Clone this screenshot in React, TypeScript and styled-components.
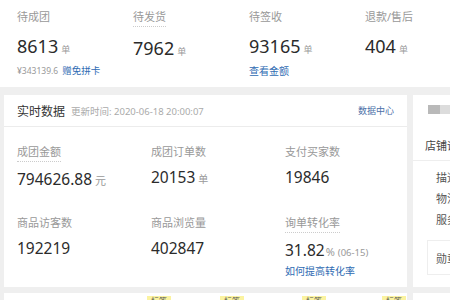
import styled, { createGlobalStyle } from "styled-components";

const GlobalStyle = createGlobalStyle`
  html, body {
    margin: 0;
    padding: 0;
    background: #efefef;
    overflow: hidden;
  }
  body {
    font-family: "Noto Sans", "Noto Sans CJK SC", sans-serif;
    color: #333;
  }
`;

const Page = styled.div`
  width: 450px;
  height: 300px;
  overflow: hidden;
  display: flex;
  flex-direction: column;
  & > * {
    flex-shrink: 0;
  }
`;

const TopCard = styled.div`
  height: 87px;
  background: #fff;
  box-sizing: border-box;
  padding: 9px 0 0 17px;
  display: grid;
  grid-template-columns: repeat(4, 116px);
  align-items: start;
`;

const Label = styled.span<{ $dotted?: boolean }>`
  align-self: flex-start;
  font-size: 11px;
  line-height: 16px;
  color: #999;
  padding-bottom: ${({ $dotted }) => ($dotted ? "1px" : "0")};
  border-bottom: ${({ $dotted }) => ($dotted ? "1px dotted #ccc" : "none")};
  white-space: nowrap;
`;

const Stat = styled.div`
  display: flex;
  flex-direction: column;
`;

const BigNumber = styled.div`
  margin-top: 9px;
  font-size: 18px;
  line-height: 24px;
  color: #2b2b2b;
  white-space: nowrap;
`;

const Unit = styled.span<{ $size?: number; $gap?: number }>`
  font-size: ${({ $size }) => $size ?? 9}px;
  color: #999;
  margin-left: ${({ $gap }) => $gap ?? 3}px;
`;

const SubLine = styled.div<{ $gap?: number }>`
  margin-top: ${({ $gap }) => $gap ?? 3}px;
  font-size: 8.5px;
  line-height: 12px;
  color: #999;
  white-space: nowrap;
`;

const Link = styled.span<{ $size?: number; $gap?: number }>`
  font-size: ${({ $size }) => $size ?? 9.5}px;
  color: #2f6bb3;
  margin-left: ${({ $gap }) => $gap ?? 0}px;
`;

const MiddleRow = styled.div`
  display: flex;
  margin-top: 8px;
  height: 192px;
`;

const MainCard = styled.div`
  width: 403px;
  margin-left: 4px;
  background: #fff;
  display: flex;
  flex-direction: column;
`;

const CardHeader = styled.div`
  height: 31px;
  display: flex;
  align-items: center;
  padding: 0 13px;
  border-bottom: 1px solid #ececec;
`;

const HeaderTitle = styled.span`
  font-size: 12px;
  color: #333;
`;

const HeaderTime = styled.span`
  font-size: 9.5px;
  color: #aaa;
  margin-left: 6px;
`;

const HeaderLink = styled.span`
  margin-left: auto;
  font-size: 9px;
  color: #4a6fa8;
`;

const CardBody = styled.div`
  display: grid;
  grid-template-columns: 134px 134px 134px;
  row-gap: 23px;
  padding: 17px 0 0 13px;
`;

const MetricNumber = styled.div`
  margin-top: 6px;
  font-size: 15.5px;
  line-height: 22px;
  color: #2b2b2b;
  white-space: nowrap;
`;

const Note = styled.span`
  font-size: 9.5px;
  color: #999;
  margin-left: 3px;
`;

const SideCard = styled.div`
  flex: 1;
  margin-left: 6px;
  background: #fff;
  display: flex;
  flex-direction: column;
  overflow: hidden;
`;

const SideThumb = styled.div`
  margin: 10px 0 0 15px;
  display: flex;
  height: 9px;
`;

const ThumbPiece = styled.div<{ $tone: string; $w: number }>`
  width: ${({ $w }) => $w}px;
  flex-shrink: 0;
  background: ${({ $tone }) => $tone};
`;

const SideTitle = styled.div`
  margin-top: 24px;
  padding: 0 0 6px 12px;
  border-bottom: 1px solid #eee;
  font-size: 11px;
  line-height: 16px;
  color: #444;
  white-space: nowrap;
`;

const SideList = styled.div`
  display: flex;
  flex-direction: column;
  gap: 5px;
  padding: 9px 0 0 23px;
`;

const SideItem = styled.span`
  font-size: 11px;
  line-height: 16px;
  color: #555;
  white-space: nowrap;
`;

const SideBox = styled.div`
  margin: 12px 0 0 14px;
  height: 33px;
  border: 1px solid #eee;
  border-right: none;
  display: flex;
  align-items: center;
  padding-left: 8px;
  font-size: 11px;
  color: #555;
  white-space: nowrap;
`;

const BottomRow = styled.div`
  display: flex;
  margin-top: 6px;
  height: 20px;
`;

const BottomCard = styled.div`
  width: 403px;
  margin-left: 4px;
  background: #fff;
  display: grid;
  grid-template-columns: 143px 73px 82px 80px 1fr;
  align-items: start;
  padding-top: 3px;
`;

const Tag = styled.span`
  justify-self: start;
  height: 12px;
  padding: 0 4px;
  background: #fbf3a0;
  font-size: 8px;
  line-height: 10px;
  color: #555;
  &:first-child {
    grid-column: 2;
  }
`;

const BottomSide = styled.div`
  flex: 1;
  margin-left: 6px;
  background: #fff;
`;

const topStats = [
  { label: "待成团", value: "8613", extra: "price" },
  { label: "待发货", value: "7962", dotted: true },
  { label: "待签收", value: "93165", extra: "amount" },
  { label: "退款/售后", value: "404" },
];

export default function App() {
  return (
    <Page>
      <GlobalStyle />
      <TopCard>
        {topStats.map((s) => (
          <Stat key={s.label}>
            <Label $dotted={s.dotted}>{s.label}</Label>
            <BigNumber>
              {s.value}
              <Unit>单</Unit>
            </BigNumber>
            {s.extra === "price" && (
              <SubLine>
                ¥343139.6<Link $gap={4}>赠免拼卡</Link>
              </SubLine>
            )}
            {s.extra === "amount" && (
              <SubLine>
                <Link $size={10}>查看金额</Link>
              </SubLine>
            )}
          </Stat>
        ))}
      </TopCard>

      <MiddleRow>
        <MainCard>
          <CardHeader>
            <HeaderTitle>实时数据</HeaderTitle>
            <HeaderTime>更新时间: 2020-06-18 20:00:07</HeaderTime>
            <HeaderLink>数据中心</HeaderLink>
          </CardHeader>
          <CardBody>
            <Stat>
              <Label $dotted>成团金额</Label>
              <MetricNumber>
                794626.88<Unit $size={11}>元</Unit>
              </MetricNumber>
            </Stat>
            <Stat>
              <Label>成团订单数</Label>
              <MetricNumber>
                20153<Unit $size={10}>单</Unit>
              </MetricNumber>
            </Stat>
            <Stat>
              <Label>支付买家数</Label>
              <MetricNumber>19846</MetricNumber>
            </Stat>
            <Stat>
              <Label>商品访客数</Label>
              <MetricNumber>192219</MetricNumber>
            </Stat>
            <Stat>
              <Label>商品浏览量</Label>
              <MetricNumber>402847</MetricNumber>
            </Stat>
            <Stat>
              <Label $dotted>询单转化率</Label>
              <MetricNumber>
                31.82<Unit $size={11} $gap={1}>%</Unit>
                <Note>(06-15)</Note>
              </MetricNumber>
              <SubLine $gap={1}>
                <Link $size={10}>如何提高转化率</Link>
              </SubLine>
            </Stat>
          </CardBody>
        </MainCard>

        <SideCard>
          <SideThumb>
            <ThumbPiece $tone="#b9b9b9" $w={12} />
            <ThumbPiece $tone="#dcdcdc" $w={10} />
          </SideThumb>
          <SideTitle>店铺评分</SideTitle>
          <SideList>
            <SideItem>描述</SideItem>
            <SideItem>物流</SideItem>
            <SideItem>服务</SideItem>
          </SideList>
          <SideBox>勋章</SideBox>
        </SideCard>
      </MiddleRow>

      <BottomRow>
        <BottomCard>
          <Tag>标签</Tag>
          <Tag>标签</Tag>
          <Tag>标签</Tag>
          <Tag>标签</Tag>
        </BottomCard>
        <BottomSide />
      </BottomRow>
    </Page>
  );
}
